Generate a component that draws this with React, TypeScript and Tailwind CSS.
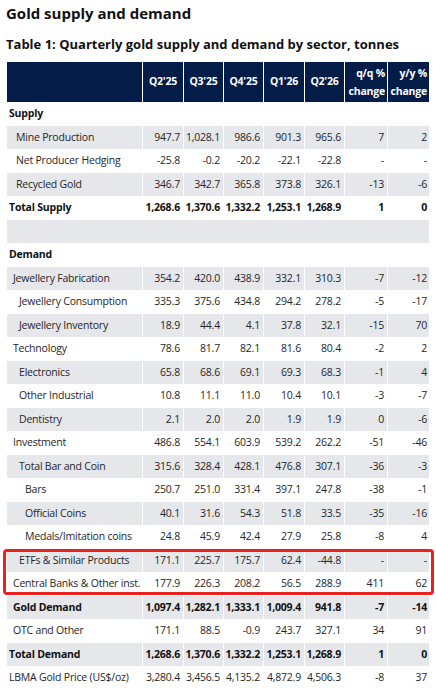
import React from 'react';

type Row = {
  label: string;
  indent?: number;
  bold?: boolean;
  vals?: string[];
  blank?: boolean;
};

const rows: Row[] = [
  { label: 'Supply', indent: 0, bold: true },
  { label: 'Mine Production', indent: 1, vals: ['947.7', '1,028.1', '986.6', '901.3', '965.6', '7', '2'] },
  { label: 'Net Producer Hedging', indent: 1, vals: ['-25.8', '-0.2', '-20.2', '-22.1', '-22.8', '-', '-'] },
  { label: 'Recycled Gold', indent: 1, vals: ['346.7', '342.7', '365.8', '373.8', '326.1', '-13', '-6'] },
  { label: 'Total Supply', indent: 0, bold: true, vals: ['1,268.6', '1,370.6', '1,332.2', '1,253.1', '1,268.9', '1', '0'] },
  { label: '', blank: true },
  { label: 'Demand', indent: 0, bold: true },
  { label: 'Jewellery Fabrication', indent: 2, vals: ['354.2', '420.0', '438.9', '332.1', '310.3', '-7', '-12'] },
  { label: 'Jewellery Consumption', indent: 3, vals: ['335.3', '375.6', '434.8', '294.2', '278.2', '-5', '-17'] },
  { label: 'Jewellery Inventory', indent: 3, vals: ['18.9', '44.4', '4.1', '37.8', '32.1', '-15', '70'] },
  { label: 'Technology', indent: 2, vals: ['78.6', '81.7', '82.1', '81.6', '80.4', '-2', '2'] },
  { label: 'Electronics', indent: 3, vals: ['65.8', '68.6', '69.1', '69.3', '68.3', '-1', '4'] },
  { label: 'Other Industrial', indent: 3, vals: ['10.8', '11.1', '11.0', '10.4', '10.1', '-3', '-7'] },
  { label: 'Dentistry', indent: 3, vals: ['2.1', '2.0', '2.0', '1.9', '1.9', '0', '-6'] },
  { label: 'Investment', indent: 2, vals: ['486.8', '554.1', '603.9', '539.2', '262.2', '-51', '-46'] },
  { label: 'Total Bar and Coin', indent: 3, vals: ['315.6', '328.4', '428.1', '476.8', '307.1', '-36', '-3'] },
  { label: 'Bars', indent: 4, vals: ['250.7', '251.0', '331.4', '397.1', '247.8', '-38', '-1'] },
  { label: 'Official Coins', indent: 4, vals: ['40.1', '31.6', '54.3', '51.8', '33.5', '-35', '-16'] },
  { label: 'Medals/Imitation coins', indent: 4, vals: ['24.8', '45.9', '42.4', '27.9', '25.8', '-8', '4'] },
  { label: 'ETFs & Similar Products', indent: 3, vals: ['171.1', '225.7', '175.7', '62.4', '-44.8', '-', '-'] },
  { label: 'Central Banks & Other inst.', indent: 2, vals: ['177.9', '226.3', '208.2', '56.5', '288.9', '411', '62'] },
  { label: 'Gold Demand', indent: 2, bold: true, vals: ['1,097.4', '1,282.1', '1,333.1', '1,009.4', '941.8', '-7', '-14'] },
  { label: 'OTC and Other', indent: 2, vals: ['171.1', '88.5', '-0.9', '243.7', '327.1', '34', '91'] },
  { label: 'Total Demand', indent: 0, bold: true, vals: ['1,268.6', '1,370.6', '1,332.2', '1,253.1', '1,268.9', '1', '0'] },
  { label: 'LBMA Gold Price (US$/oz)', indent: 0, vals: ['3,280.4', '3,456.5', '4,135.2', '4,872.9', '4,506.3', '-8', '37'] },
];

const indentClass = ['pl-[2px]', 'pl-[9px]', 'pl-[6px]', 'pl-[12px]', 'pl-[18px]'];

const cols = 'grid grid-cols-[135px_40px_39px_39px_40px_39px_42px_41px] gap-x-px';

export default function App() {
  return (
    <div className="w-[436px] h-[689px] overflow-hidden bg-white text-[#262626] font-['Open_Sans','Noto_Sans',sans-serif]">
      <h1 className="pl-[6px] pt-[3px] text-[15px] font-bold leading-[21px] text-[#111]">Gold supply and demand</h1>
      <h2 className="pl-[6px] mt-[12px] text-[13px] font-bold leading-[16px] text-[#111]">
        Table 1: Quarterly gold supply and demand by sector, tonnes
      </h2>

      <div className="relative mx-[7px] mt-[10px]">
        {/* header */}
        <div className={`${cols} h-[40px] text-[10.5px] tracking-[-0.2px] font-bold text-white`}>
          <div className="bg-[#031d48]" />
          {["Q2'25", "Q3'25", "Q4'25", "Q1'26", "Q2'26"].map((q) => (
            <div key={q} className="bg-[#031d48] flex items-center justify-center">{q}</div>
          ))}
          {['q/q %', 'y/y %'].map((h) => (
            <div key={h} className="bg-[#031d48] flex flex-col justify-center items-end pr-[2px] leading-[18px]">
              <span>{h}</span>
              <span>change</span>
            </div>
          ))}
        </div>

        {/* body */}
        <div className="text-[10.5px] tracking-[-0.2px]">
          {rows.map((r, i) => {
            const shaded = i % 2 === 1;
            const bg = shaded ? 'bg-[#e5e7eb]' : 'bg-white';
            if (r.blank) {
              return <div key={i} className={`h-[23.5px] ${bg}`} />;
            }
            return (
              <div key={i} className={`${cols} h-[23.5px] ${r.bold ? 'font-bold text-[#111]' : ''}`}>
                <div className={`${bg} flex items-center pt-px whitespace-nowrap ${indentClass[r.indent ?? 0]}`}>{r.label}</div>
                {Array.from({ length: 7 }).map((_, j) => (
                  <div
                    key={j}
                    className={`${bg} flex items-center justify-end pt-px ${j === 6 ? 'pr-[2px]' : 'pr-[3px]'}`}
                  >
                    {r.vals ? r.vals[j] : ''}
                  </div>
                ))}
              </div>
            );
          })}
        </div>

        {/* highlight */}
        <div className="absolute left-[-4px] w-[431px] top-[487px] h-[46px] border-[3px] border-[#e8231f] rounded-[4px] pointer-events-none" />
      </div>
    </div>
  );
}
